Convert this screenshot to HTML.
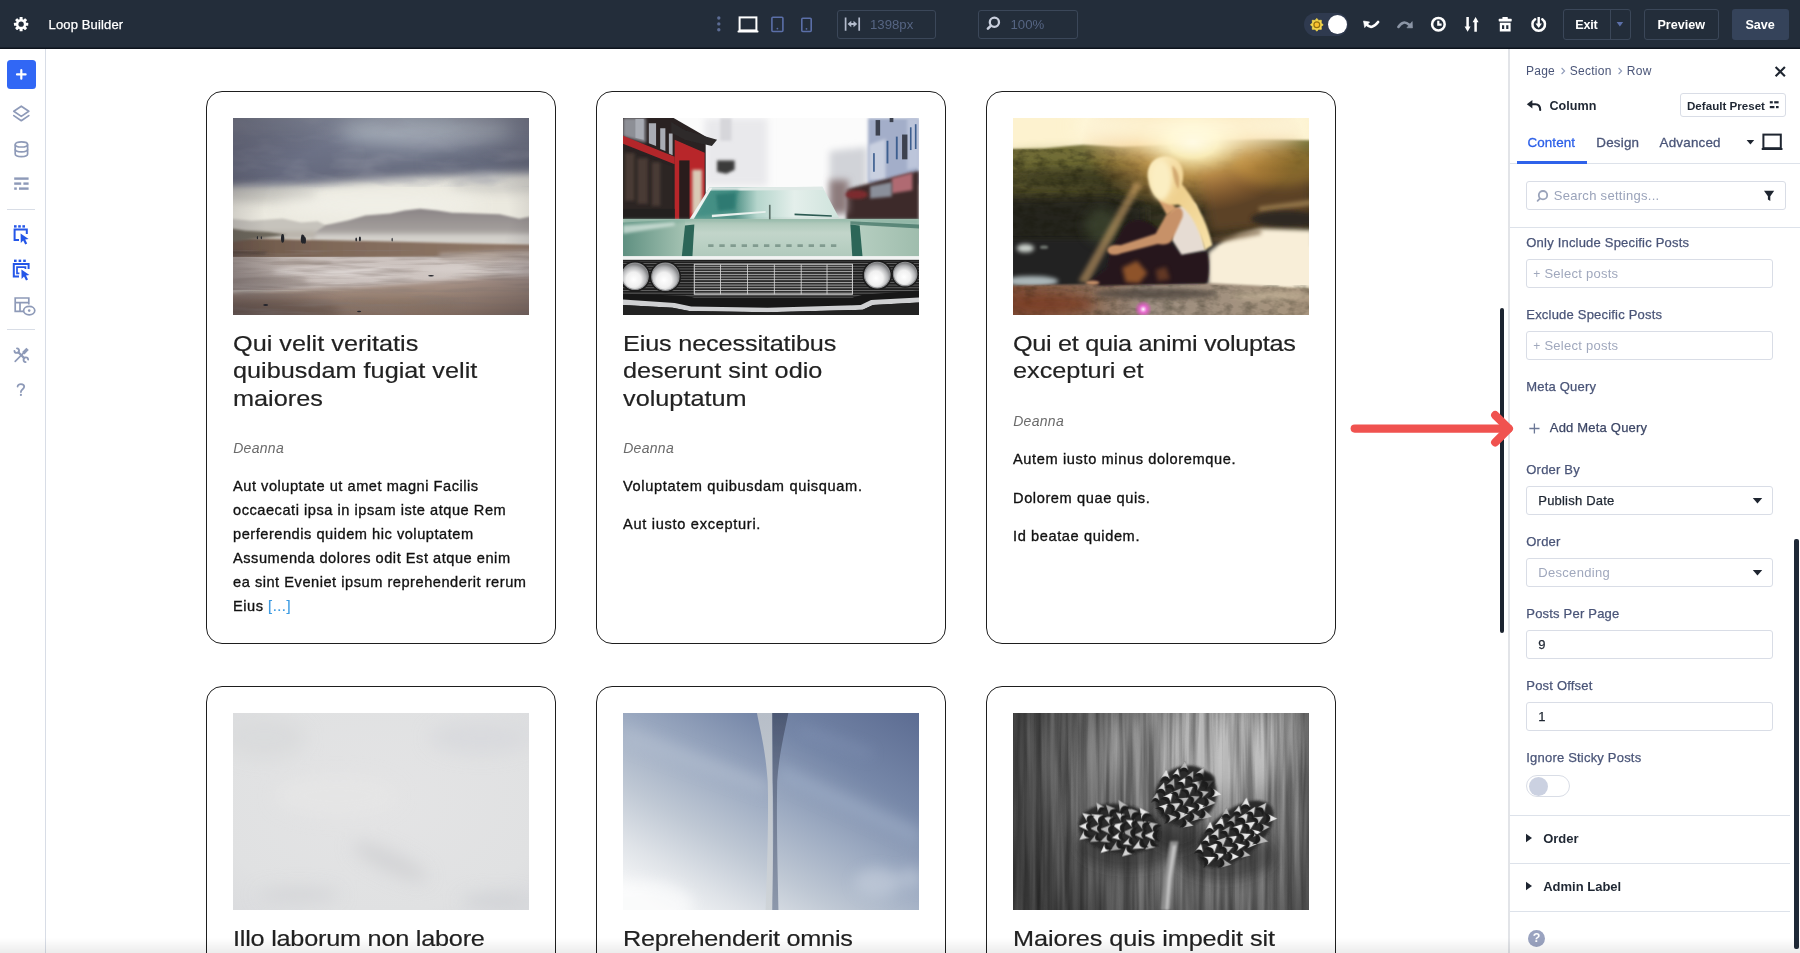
<!DOCTYPE html>
<html>
<head>
<meta charset="utf-8">
<title>Loop Builder</title>
<style>
*{box-sizing:border-box;margin:0;padding:0}
html,body{width:1800px;height:953px;overflow:hidden;background:#fff}
body{font-family:"Liberation Sans",sans-serif;position:relative;color:#222}
#topbar,#left,#right,#canvas{will-change:transform}
.abs{position:absolute}
#topbar{position:absolute;left:0;top:0;width:1800px;height:49.1px;background:#232d3a;box-shadow:inset 0 -1.4px 0 #0d131c;z-index:5}
#topbar .t{position:absolute;color:#fff;font-size:13px;white-space:nowrap;line-height:16px;margin-top:.5px}
.tb-box{position:absolute;border:1px solid #3b4759;border-radius:3px}
#left{position:absolute;left:0;top:48px;width:46px;height:905px;border-right:1px solid #d8dde6;background:#fff}
#right{position:absolute;left:1508px;top:48px;width:292px;height:905px;border-left:2px solid #e2e4e8;background:#fff}
#right .lbl{position:absolute;left:17px;font-size:13px;color:#4a5578;white-space:nowrap;line-height:16px;letter-spacing:.2px;-webkit-text-stroke:.25px #4a5578}
#right .box{position:absolute;left:17px;width:247px;height:29px;border:1px solid #d9dde6;border-radius:3px;background:#fff;font-size:13px;line-height:27px;white-space:nowrap}
#right .hr{position:absolute;left:0;height:1px;background:#dde2ea}
.card{position:absolute;width:350px;border:1.5px solid #1e1e1e;border-radius:16px;background:#fff}
.card .img{position:absolute;left:25.5px;top:25.5px;width:296px;height:197px;overflow:hidden}
.card h2{position:absolute;left:25.5px;top:238.1px;font-weight:400;font-size:22px;line-height:27.2px;color:#222;-webkit-text-stroke:.18px #222;white-space:nowrap;transform:scaleX(1.148);transform-origin:0 0}
.card .au{position:absolute;left:26.2px;font-style:italic;font-size:14px;letter-spacing:.3px;color:#6a6a6a;line-height:18px;white-space:nowrap}
.card .p{position:absolute;left:26px;margin-top:.6px;font-size:14.6px;line-height:24px;color:#111;white-space:nowrap;letter-spacing:.53px;-webkit-text-stroke:.33px #111}
.card .p a{color:#3b9ae1;-webkit-text-stroke:.2px #3b9ae1}
</style>
</head>
<body>

<!-- CANVAS -->
<div id="canvas">
  <div class="card" style="left:206px;top:91px;height:553px" id="c1">
    <div class="img" id="img1"><svg viewBox="0 0 1432 953" width="296" height="197" preserveAspectRatio="none" style="display:block">
<defs>
  <filter id="a-b4" filterUnits="userSpaceOnUse" x="-300" y="-300" width="2032" height="1553"><feGaussianBlur stdDeviation="4"/></filter>
  <filter id="a-b10" filterUnits="userSpaceOnUse" x="-300" y="-300" width="2032" height="1553"><feGaussianBlur stdDeviation="10"/></filter>
  <filter id="a-b22" filterUnits="userSpaceOnUse" x="-300" y="-300" width="2032" height="1553"><feGaussianBlur stdDeviation="22"/></filter>
  <filter id="a-b45" filterUnits="userSpaceOnUse" x="-300" y="-300" width="2032" height="1553"><feGaussianBlur stdDeviation="45"/></filter>
  <linearGradient id="a-sky" x1="0" y1="0" x2="0" y2="1">
    <stop offset="0" stop-color="#8b92a3"/><stop offset=".5" stop-color="#747a8d"/><stop offset="1" stop-color="#5e6275"/>
  </linearGradient>
  <linearGradient id="a-mtn" x1="0" y1="0" x2="0" y2="1">
    <stop offset="0" stop-color="#8b8586"/><stop offset=".6" stop-color="#a29d9b"/><stop offset="1" stop-color="#cdc9c4"/>
  </linearGradient>
  <linearGradient id="a-sand1" x1="0" y1="0" x2="1" y2="0">
    <stop offset="0" stop-color="#6a5547"/><stop offset=".35" stop-color="#806959"/><stop offset="1" stop-color="#917a6a"/>
  </linearGradient>
  <linearGradient id="a-wet" x1="0" y1="0" x2="1" y2="0">
    <stop offset="0" stop-color="#a89c96"/><stop offset=".3" stop-color="#c9bfbb"/><stop offset=".7" stop-color="#cfc6c2"/><stop offset="1" stop-color="#c2b7b2"/>
  </linearGradient>
  <linearGradient id="a-sand2" x1="0" y1="0" x2="0" y2="1">
    <stop offset="0" stop-color="#a8948a"/><stop offset=".5" stop-color="#9a8375"/><stop offset="1" stop-color="#8a7264"/>
  </linearGradient>
  <radialGradient id="a-vig" cx=".52" cy=".5" r=".75">
    <stop offset=".55" stop-color="#2a2530" stop-opacity="0"/><stop offset="1" stop-color="#2a2530" stop-opacity=".42"/>
  </radialGradient>
  <filter id="a-tex" x="0" y="0" width="100%" height="100%">
    <feTurbulence type="fractalNoise" baseFrequency="0.0035 0.045" numOctaves="3" seed="8"/>
    <feColorMatrix type="matrix" values="0 0 0 0 0.25  0 0 0 0 0.2  0 0 0 0 0.18  2.4 0 0 0 -1.0"/>
  </filter>
  <filter id="a-tex2" x="0" y="0" width="100%" height="100%">
    <feTurbulence type="fractalNoise" baseFrequency="0.004 0.012" numOctaves="3" seed="21"/>
    <feColorMatrix type="matrix" values="0 0 0 0 0.3  0 0 0 0 0.31  0 0 0 0 0.38  2.2 0 0 0 -1.0"/>
  </filter>
</defs>
<rect width="1432" height="953" fill="#ebe9df"/>
<!-- dark storm sky -->
<path d="M-60 -60 H1500 V262 L1250 268 L1000 282 L700 300 L420 322 L200 340 L-60 345Z" fill="url(#a-sky)" filter="url(#a-b22)"/>
<ellipse cx="930" cy="55" rx="430" ry="75" fill="#a9b1bb" opacity=".85" filter="url(#a-b45)"/>
<ellipse cx="230" cy="170" rx="330" ry="110" fill="#666a80" opacity=".5" filter="url(#a-b45)"/>
<ellipse cx="1250" cy="210" rx="300" ry="60" fill="#5c6072" opacity=".5" filter="url(#a-b45)"/>
<!-- greyer clouds low -->
<ellipse cx="150" cy="370" rx="260" ry="40" fill="#bdbcb6" opacity=".8" filter="url(#a-b22)"/>
<ellipse cx="1300" cy="330" rx="250" ry="35" fill="#c9c8c2" opacity=".7" filter="url(#a-b22)"/>
<ellipse cx="700" cy="420" rx="500" ry="60" fill="#f3f2ea" opacity=".8" filter="url(#a-b45)"/>
<!-- far mountains left -->
<path d="M-10 487 L90 497 L240 486 L330 506 L410 500 L470 530 L470 580 L-10 580Z" fill="#c6c3bc" filter="url(#a-b4)"/>
<!-- main mountain -->
<path d="M380 565 L450 518 L560 495 L640 472 L760 462 L830 448 L905 439 L990 448 L1060 458 L1180 462 L1290 466 L1385 487 L1440 477 V600 H380Z" fill="url(#a-mtn)" filter="url(#a-b4)"/>
<!-- mist / sea strip -->
<rect x="380" y="566" width="1100" height="44" fill="#d3d0cb" filter="url(#a-b10)"/>
<rect x="-20" y="548" width="420" height="30" fill="#b9b3aa" filter="url(#a-b10)"/>
<!-- upper sand -->
<path d="M-20 578 L300 588 L700 596 L1100 606 L1450 612 V665 L1100 672 L-20 682Z" fill="url(#a-sand1)" filter="url(#a-b4)"/>
<path d="M-10 535 L60 545 L170 552 L260 565 L-10 600Z" fill="#6d675c" filter="url(#a-b4)"/>
<path d="M-10 640 L170 648 L150 662 L-10 668Z" fill="#5a4a40" filter="url(#a-b4)"/>
<!-- wet sand -->
<rect x="-20" y="672" width="1480" height="160" fill="url(#a-wet)"/>
<path d="M1000 655 L1450 640 V690 L1000 685Z" fill="#b5a79f" filter="url(#a-b10)"/>
<ellipse cx="520" cy="745" rx="330" ry="26" fill="#ded7d4" opacity=".8" filter="url(#a-b10)"/>
<ellipse cx="1150" cy="730" rx="250" ry="20" fill="#d9d1ce" opacity=".7" filter="url(#a-b10)"/>
<ellipse cx="160" cy="790" rx="200" ry="22" fill="#978a84" opacity=".7" filter="url(#a-b10)"/>
<ellipse cx="330" cy="700" rx="150" ry="10" fill="#a3968f" opacity=".7" filter="url(#a-b4)"/>
<!-- lower sand -->
<path d="M-20 845 L300 832 L650 815 L1000 790 L1250 772 L1450 765 V980 H-20Z" fill="url(#a-sand2)" filter="url(#a-b10)"/>
<ellipse cx="200" cy="930" rx="330" ry="55" fill="#705b50" opacity=".75" filter="url(#a-b22)"/>
<ellipse cx="800" cy="900" rx="300" ry="30" fill="#85705f" opacity=".6" filter="url(#a-b22)"/>
<rect x="0" y="640" width="1432" height="313" fill="#000" filter="url(#a-tex)" opacity=".5"/>
<rect x="0" y="0" width="1432" height="330" fill="#000" filter="url(#a-tex2)" opacity=".45"/>
<!-- people -->
<g fill="#23252b">
  <ellipse cx="240" cy="583" rx="8" ry="20"/><circle cx="240" cy="566" r="5"/>
  <ellipse cx="338" cy="587" rx="10" ry="21"/><circle cx="336" cy="569" r="5"/><ellipse cx="347" cy="592" rx="6" ry="16"/>
  <ellipse cx="596" cy="588" rx="4" ry="10"/><ellipse cx="614" cy="585" rx="5" ry="12"/>
  <ellipse cx="770" cy="588" rx="3" ry="9"/>
  <ellipse cx="118" cy="579" rx="3" ry="8"/><ellipse cx="137" cy="579" rx="3" ry="7"/>
  <ellipse cx="958" cy="763" rx="14" ry="4"/><ellipse cx="158" cy="905" rx="12" ry="5"/><ellipse cx="610" cy="936" rx="10" ry="4"/>
</g>
<rect width="1432" height="953" fill="url(#a-vig)"/>
</svg>
</div>
    <h2>Qui velit veritatis<br>quibusdam fugiat velit<br>maiores</h2>
    <div class="au" style="top:347px">Deanna</div>
    <div class="p" style="top:381px">Aut voluptate ut amet magni Facilis<br>occaecati ipsa in ipsam iste atque Rem<br>perferendis quidem hic voluptatem<br>Assumenda dolores odit Est atque enim<br>ea sint Eveniet ipsum reprehenderit rerum<br>Eius <a>[...]</a></div>
  </div>
  <div class="card" style="left:596px;top:91px;height:553px" id="c2">
    <div class="img" id="img2"><svg viewBox="0 0 1432 953" width="296" height="197" preserveAspectRatio="none" style="display:block">
<defs>
  <filter id="b-b3" filterUnits="userSpaceOnUse" x="-300" y="-300" width="2032" height="1553"><feGaussianBlur stdDeviation="3"/></filter>
  <filter id="b-b8" filterUnits="userSpaceOnUse" x="-300" y="-300" width="2032" height="1553"><feGaussianBlur stdDeviation="8"/></filter>
  <filter id="b-b18" filterUnits="userSpaceOnUse" x="-300" y="-300" width="2032" height="1553"><feGaussianBlur stdDeviation="18"/></filter>
  <linearGradient id="b-hood" x1="0" y1="0" x2="0" y2="1">
    <stop offset="0" stop-color="#a8c4b5"/><stop offset=".35" stop-color="#c2d5ca"/><stop offset="1" stop-color="#afc9bb"/>
  </linearGradient>
  <linearGradient id="b-hoodL" x1="0" y1="0" x2="1" y2="0">
    <stop offset="0" stop-color="#5f9081"/><stop offset="1" stop-color="#a5c3b3"/>
  </linearGradient>
  <linearGradient id="b-hoodR" x1="0" y1="0" x2="1" y2="0">
    <stop offset="0" stop-color="#b4cdbf"/><stop offset="1" stop-color="#9fbdad"/>
  </linearGradient>
  <linearGradient id="b-ws" x1="0" y1="0" x2="1" y2="0">
    <stop offset="0" stop-color="#5ea093"/><stop offset=".3" stop-color="#4f9186"/><stop offset=".45" stop-color="#b5d5cc"/><stop offset=".7" stop-color="#e4efeb"/><stop offset="1" stop-color="#cfe3dc"/>
  </linearGradient>
  <pattern id="b-bars" width="10" height="13" patternUnits="userSpaceOnUse"><rect width="10" height="13" fill="#2b2b2b"/><rect y="0" width="10" height="4.5" fill="#b2b2b2"/></pattern>
  <pattern id="b-bars2" width="10" height="13" patternUnits="userSpaceOnUse"><rect width="10" height="13" fill="#1e1e1e"/><rect y="0" width="10" height="4" fill="#6a6a6a"/></pattern>
  <radialGradient id="b-lamp" cx=".45" cy=".62" r=".62">
    <stop offset="0" stop-color="#ffffff"/><stop offset=".45" stop-color="#f0f0f0"/><stop offset=".75" stop-color="#b4b5b7"/><stop offset="1" stop-color="#6c6d6f"/>
  </radialGradient>
</defs>
<rect width="1432" height="953" fill="#fbfbfb"/>
<!-- white-ish building behind, left centre -->
<path d="M395 0 H700 V330 H395Z" fill="#e9e9ec" filter="url(#b-b18)"/>
<path d="M470 0 H525 V110 H470Z" fill="#d6d6da" filter="url(#b-b8)"/>
<path d="M455 205 H540 V250 L500 270 L455 260Z" fill="#3a3a3a" filter="url(#b-b8)"/>
<!-- left dark building -->
<path d="M0 0 H245 L400 90 V520 H0Z" fill="#2a2423" filter="url(#b-b3)"/>
<path d="M0 0 H110 V120 L0 90Z" fill="#8d8f96" filter="url(#b-b8)"/>
<g fill="#a9acb4" filter="url(#b-b3)"><path d="M60 5 H100 V105 L60 95Z"/><path d="M125 25 H160 V135 L125 122Z"/><path d="M180 50 H205 V160 L180 150Z"/><path d="M222 75 H240 V180 L222 172Z"/></g>
<path d="M0 86 L250 188 V224 L0 124Z" fill="#b3262b" filter="url(#b-b3)"/>
<path d="M250 105 L395 168 V500 H250Z" fill="#b8282c" filter="url(#b-b3)"/>
<path d="M272 205 H322 V500 H272Z" fill="#2a1d1d" filter="url(#b-b3)"/>
<path d="M335 250 H382 V440 L335 470Z" fill="#d9c9b5" filter="url(#b-b8)"/>
<path d="M235 20 L300 60 L455 105 L430 135 L300 105 L235 70Z" fill="#2d2b2b" filter="url(#b-b3)"/>
<path d="M0 150 L240 235 V440 H0Z" fill="#2c2523"/>
<g fill="#4a3a34" filter="url(#b-b8)"><rect x="10" y="170" width="45" height="230"/><rect x="70" y="195" width="50" height="220"/><rect x="140" y="215" width="40" height="210"/></g>
<rect x="0" y="440" width="250" height="70" fill="#23201f"/>
<!-- right buildings -->
<path d="M1000 160 L1180 140 V470 H1000Z" fill="#d1d3d8" filter="url(#b-b18)"/>
<path d="M1185 0 H1432 V320 H1185Z" fill="#a3aec9" filter="url(#b-b8)"/>
<path d="M1190 130 L1270 100 V300 H1190Z" fill="#c9d0e0" filter="url(#b-b8)"/>
<path d="M1375 0 H1432 V240 L1375 250Z" fill="#bcc5da" filter="url(#b-b8)"/>
<g fill="#3d5f8f" filter="url(#b-b3)"><rect x="1275" y="110" width="9" height="110"/><rect x="1320" y="90" width="9" height="110"/><rect x="1210" y="170" width="8" height="90"/><rect x="1388" y="45" width="8" height="110"/><rect x="1412" y="30" width="8" height="120"/></g>
<g fill="#3e4350" filter="url(#b-b3)"><rect x="1222" y="10" width="22" height="75"/><rect x="1350" y="80" width="26" height="120"/><rect x="1290" y="0" width="18" height="20"/></g>
<path d="M1080 345 L1432 255 V510 H1080Z" fill="#3e2a2b" filter="url(#b-b8)"/>
<path d="M1000 300 H1090 V460 H1000Z" fill="#8d7a7c" filter="url(#b-b18)"/>
<path d="M1300 290 L1400 265 V350 L1300 365Z" fill="#b06a72" filter="url(#b-b8)"/>
<path d="M1195 330 L1300 310 V380 L1195 390Z" fill="#8a8f9a" filter="url(#b-b8)"/>
<ellipse cx="1130" cy="370" rx="55" ry="22" fill="#7c2a2d" filter="url(#b-b8)"/>
<!-- car roof / windshield -->
<path d="M418 338 L965 333 L1045 482 L325 492Z" fill="url(#b-ws)" filter="url(#b-b3)"/>
<path d="M418 338 L965 333 L972 348 L412 352Z" fill="#dfe9e6"/>
<path d="M425 350 L560 350 L540 450 L345 480Z" fill="#3f8d83" opacity=".8" filter="url(#b-b8)"/>
<path d="M450 370 L545 360 L540 440 L460 450Z" fill="#2f7a72" filter="url(#b-b8)"/>
<path d="M320 492 L418 338 L432 338 L340 492Z" fill="#eef3f1"/>
<path d="M430 468 L690 450 L690 458 L430 480Z" fill="#e8f0ed"/><path d="M830 462 L1010 470 L1010 478 L830 470Z" fill="#2c5a52"/>
<!-- hood -->
<rect x="0" y="488" width="1432" height="195" fill="url(#b-hood)"/>
<path d="M0 505 L300 490 V683 H0Z" fill="url(#b-hoodL)"/>
<path d="M1150 495 L1432 520 V683 H1150Z" fill="url(#b-hoodR)"/>
<path d="M0 488 H1432 V520 L1100 500 L340 500 L0 530Z" fill="#7aa898" opacity=".55" filter="url(#b-b8)"/>
<path d="M300 520 L345 515 L335 683 L283 683Z" fill="#2c6658"/>
<path d="M1100 515 L1145 520 L1160 683 L1110 683Z" fill="#2c6658"/>
<path d="M0 520 L250 505 L250 520 L0 560Z" fill="#dfece5" opacity=".7" filter="url(#b-b8)"/>
<path d="M1100 500 L1432 515 V535 L1100 515Z" fill="#3d6f62" opacity=".7" filter="url(#b-b3)"/>
<path d="M412 617 H1048" stroke="#6f8a7f" stroke-width="13" stroke-dasharray="26 28" opacity=".75"/>
<rect x="706" y="420" width="8" height="70" fill="#5b6f68"/>
<!-- chrome strip -->
<rect x="0" y="668" width="1432" height="22" fill="#f2f4f3"/>
<rect x="0" y="686" width="1432" height="10" fill="#1f1f1f"/>
<!-- grille -->
<rect x="0" y="694" width="1432" height="175" fill="url(#b-bars2)"/>
<rect x="345" y="708" width="765" height="145" fill="url(#b-bars)"/>
<g fill="#d9d9d9"><rect x="470" y="708" width="4" height="145"/><rect x="600" y="708" width="4" height="145"/><rect x="730" y="708" width="4" height="145"/><rect x="860" y="708" width="4" height="145"/><rect x="985" y="708" width="4" height="145"/></g>
<path d="M345 708 H1110 V853 H345Z" fill="none" stroke="#cfcfcf" stroke-width="5"/>
<!-- headlights -->
<g>
  <circle cx="58" cy="766" r="74" fill="#1c1c1c"/><circle cx="58" cy="766" r="64.0" fill="url(#b-lamp)"/><circle cx="58" cy="766" r="64.0" fill="none" stroke="#8f9092" stroke-width="5"/>
  <circle cx="205" cy="768" r="76" fill="#1c1c1c"/><circle cx="205" cy="768" r="66.0" fill="url(#b-lamp)"/><circle cx="205" cy="768" r="66.0" fill="none" stroke="#8f9092" stroke-width="5"/>
  <circle cx="1230" cy="760" r="72" fill="#1c1c1c"/><circle cx="1230" cy="760" r="62.0" fill="url(#b-lamp)"/><circle cx="1230" cy="760" r="62.0" fill="none" stroke="#8f9092" stroke-width="5"/>
  <circle cx="1365" cy="755" r="66" fill="#1c1c1c"/><circle cx="1365" cy="755" r="57.0" fill="url(#b-lamp)"/><circle cx="1365" cy="755" r="57.0" fill="none" stroke="#8f9092" stroke-width="5"/>
</g>
<!-- bumper -->
<path d="M0 850 L300 860 L345 868 H1110 L1160 855 L1432 835 V953 H0Z" fill="#171717"/>
<path d="M0 878 L250 895 L330 912 L700 918 L1150 905 L1200 880 L1432 868 V893 L1210 905 L1160 928 L700 940 L320 934 L240 918 L0 905Z" fill="#cfd0d2" filter="url(#b-b3)"/>
<path d="M0 905 L240 918 L320 934 L700 940 L1160 928 L1210 905 L1432 893 V953 H0Z" fill="#222" filter="url(#b-b3)"/>
</svg>
</div>
    <h2><span style="letter-spacing:-.14px">Eius necessitatibus</span><br>deserunt sint odio<br>voluptatum</h2>
    <div class="au" style="top:347px">Deanna</div>
    <div class="p" style="top:381px;letter-spacing:.66px">Voluptatem quibusdam quisquam.</div>
    <div class="p" style="top:419.5px;letter-spacing:.7px">Aut iusto excepturi.</div>
  </div>
  <div class="card" style="left:986px;top:91px;height:553px" id="c3">
    <div class="img" id="img3"><svg viewBox="0 0 1432 953" width="296" height="197" preserveAspectRatio="none" style="display:block">
<defs>
  <filter id="c-b4" filterUnits="userSpaceOnUse" x="-300" y="-300" width="2032" height="1553"><feGaussianBlur stdDeviation="4"/></filter>
  <filter id="c-b10" filterUnits="userSpaceOnUse" x="-300" y="-300" width="2032" height="1553"><feGaussianBlur stdDeviation="10"/></filter>
  <filter id="c-b25" filterUnits="userSpaceOnUse" x="-300" y="-300" width="2032" height="1553"><feGaussianBlur stdDeviation="25"/></filter>
  <filter id="c-b50" filterUnits="userSpaceOnUse" x="-300" y="-300" width="2032" height="1553"><feGaussianBlur stdDeviation="50"/></filter>
  <filter id="c-tex" x="0" y="0" width="100%" height="100%" color-interpolation-filters="sRGB">
    <feTurbulence type="fractalNoise" baseFrequency="0.018 0.03" numOctaves="3" seed="3"/>
    <feColorMatrix type="matrix" values="0 0 0 0 0.08  0 0 0 0 0.08  0 0 0 0 0.03  1.9 0 0 0 -0.75"/>
  </filter>
  <linearGradient id="c-trees" x1="0" y1="0" x2="0" y2="1">
    <stop offset="0" stop-color="#7a7439"/><stop offset=".22" stop-color="#5b572c"/><stop offset=".55" stop-color="#3d3a22"/><stop offset="1" stop-color="#27271d"/>
  </linearGradient>
  <radialGradient id="c-sun" cx=".5" cy=".5" r=".5">
    <stop offset="0" stop-color="#fffbe6" stop-opacity="1"/><stop offset=".22" stop-color="#ffefb4" stop-opacity=".95"/><stop offset=".5" stop-color="#f0b45c" stop-opacity=".62"/><stop offset="1" stop-color="#d98a3a" stop-opacity="0"/>
  </radialGradient>
  <linearGradient id="c-rock" x1="0" y1="0" x2="1" y2="0">
    <stop offset="0" stop-color="#7a4a34"/><stop offset=".25" stop-color="#8a6a55"/><stop offset=".45" stop-color="#9d8e80"/><stop offset="1" stop-color="#a8957e"/>
  </linearGradient>
  <radialGradient id="c-flare" cx=".5" cy=".5" r=".5">
    <stop offset="0" stop-color="#fff" stop-opacity="1"/><stop offset=".4" stop-color="#f06ad8" stop-opacity=".9"/><stop offset="1" stop-color="#e040c0" stop-opacity="0"/>
  </radialGradient>
  <linearGradient id="c-hair" x1="0" y1="0" x2="1" y2="1">
    <stop offset="0" stop-color="#fdf0c4"/><stop offset=".45" stop-color="#efd08e"/><stop offset="1" stop-color="#f8e3aa"/>
  </linearGradient>
</defs>
<rect width="1432" height="953" fill="#fdf2cf"/>
<!-- trees -->
<path d="M-20 150 L150 147 L340 130 L520 139 L700 132 L860 122 L1000 106 L1200 103 L1450 108 V620 H-20Z" fill="url(#c-trees)" filter="url(#c-b4)"/>
<ellipse cx="250" cy="205" rx="330" ry="50" fill="#7f7c3e" opacity=".55" filter="url(#c-b25)"/>
<ellipse cx="170" cy="335" rx="240" ry="36" fill="#666333" opacity=".5" filter="url(#c-b25)"/>
<path d="M-40 390 L450 380 L640 420 L640 600 L-40 600Z" fill="#24241a" opacity=".82" filter="url(#c-b25)"/>
<ellipse cx="330" cy="290" rx="300" ry="40" fill="#33321f" opacity=".6" filter="url(#c-b25)"/>
<rect x="0" y="150" width="1432" height="430" fill="#000" filter="url(#c-tex)" opacity=".5"/>
<!-- right side trees, warm brown -->
<path d="M900 250 H1450 V520 L1200 540 L950 560Z" fill="#5c4326" filter="url(#c-b25)"/>
<ellipse cx="1290" cy="230" rx="220" ry="100" fill="#94722f" opacity=".75" filter="url(#c-b25)"/>
<path d="M1190 430 L1450 395 V420 L1190 455Z" fill="#a88a58" opacity=".8" filter="url(#c-b10)"/>
<ellipse cx="1320" cy="488" rx="170" ry="40" fill="#2c2820" opacity=".9" filter="url(#c-b10)"/>
<!-- water left (dark) -->
<path d="M-20 588 H1000 V820 H-20Z" fill="#202321" filter="url(#c-b10)"/>
<ellipse cx="430" cy="520" rx="85" ry="85" fill="#3f4a33" opacity=".7" filter="url(#c-b25)"/>
<!-- water right (bright) -->
<path d="M945 650 L1020 590 L1100 560 L1200 535 L1450 542 V830 H945Z" fill="#f8eed8" filter="url(#c-b10)"/>
<path d="M960 575 L1200 540 L1200 562 L960 610Z" fill="#6a5030" opacity=".65" filter="url(#c-b10)"/>
<ellipse cx="60" cy="630" rx="42" ry="20" fill="#dfe6e0" opacity=".9" filter="url(#c-b10)"/>
<ellipse cx="150" cy="625" rx="20" ry="8" fill="#9aa39a" opacity=".7" filter="url(#c-b4)"/>
<ellipse cx="90" cy="790" rx="130" ry="26" fill="#cfdde0" opacity=".8" filter="url(#c-b10)"/>
<!-- sun glow -->
<ellipse cx="870" cy="115" rx="540" ry="340" fill="url(#c-sun)"/>
<ellipse cx="860" cy="40" rx="560" ry="110" fill="#fffae2" opacity=".8" filter="url(#c-b50)"/>
<!-- flare ray -->
<path d="M588 308 L626 320 L362 800 L316 790Z" fill="#e9b774" opacity=".5" filter="url(#c-b10)"/>
<!-- rock -->
<path d="M-20 812 L350 806 L600 800 L950 798 L1200 812 L1450 825 V980 H-20Z" fill="url(#c-rock)" filter="url(#c-b4)"/>
<rect x="0" y="810" width="1432" height="143" fill="#000" filter="url(#c-tex)" opacity=".35"/>
<ellipse cx="180" cy="900" rx="220" ry="45" fill="#7a3a24" opacity=".8" filter="url(#c-b25)"/>
<ellipse cx="690" cy="850" rx="300" ry="26" fill="#4d443d" opacity=".75" filter="url(#c-b10)"/>
<ellipse cx="1250" cy="860" rx="200" ry="20" fill="#c8b79c" opacity=".6" filter="url(#c-b10)"/>
<!-- girl: skirt / legs -->
<path d="M468 652 L540 520 C570 485 640 480 690 530 L760 600 L815 660 L938 648 C952 700 950 770 935 800 L420 812 L358 798 L455 725Z" fill="#26191f" filter="url(#c-b4)"/>
<path d="M528 725 L600 690 L650 750 L610 800 L545 795Z" fill="#a8642f" opacity=".8" filter="url(#c-b10)"/>
<path d="M690 735 L740 720 L760 780 L700 790Z" fill="#8a4f2a" opacity=".6" filter="url(#c-b10)"/>
<ellipse cx="385" cy="797" rx="34" ry="11" fill="#c48f68" filter="url(#c-b4)"/>
<!-- top -->
<path d="M768 455 L850 402 L885 420 L932 640 L815 662 L770 590Z" fill="#e6dcd3" filter="url(#c-b4)"/>
<!-- arm -->
<path d="M775 440 C800 420 830 440 820 480 L770 590 C760 610 730 615 700 610 L520 655 C490 670 450 660 458 632 C470 612 500 615 520 615 L690 560 L740 470Z" fill="#c79168" filter="url(#c-b4)"/>
<!-- neck / face edge -->
<path d="M700 390 L760 395 L790 440 L745 470Z" fill="#d6a070" filter="url(#c-b4)"/>
<!-- hair -->
<path d="M655 300 C640 225 690 180 750 186 C815 195 835 255 818 320 C870 385 935 480 965 615 L928 640 C905 545 860 450 800 418 C745 430 672 395 655 300Z" fill="url(#c-hair)" filter="url(#c-b4)"/>
<ellipse cx="715" cy="300" rx="50" ry="95" fill="#fbeec2" filter="url(#c-b10)"/>
<path d="M770 230 C800 250 812 300 800 345 C790 330 775 300 770 230Z" fill="#c79a62" opacity=".75" filter="url(#c-b4)"/>
<!-- lens flare -->
<ellipse cx="630" cy="925" rx="42" ry="42" fill="url(#c-flare)"/>
</svg>
</div>
    <h2><span style="letter-spacing:-.27px">Qui et quia animi voluptas</span><br>excepturi et</h2>
    <div class="au" style="top:320px">Deanna</div>
    <div class="p" style="top:354.5px;letter-spacing:.62px">Autem iusto minus doloremque.</div>
    <div class="p" style="top:393px;letter-spacing:.6px">Dolorem quae quis.</div>
    <div class="p" style="top:431.5px;letter-spacing:.6px">Id beatae quidem.</div>
  </div>
  <div class="card" style="left:206px;top:686px;height:400px" id="c4">
    <div class="img" id="img4"><svg viewBox="0 0 1432 953" width="296" height="197" preserveAspectRatio="none" style="display:block">
<defs>
  <filter id="d-b40" filterUnits="userSpaceOnUse" x="-300" y="-300" width="2032" height="1553"><feGaussianBlur stdDeviation="40"/></filter>
  <radialGradient id="d-bg" cx=".5" cy=".45" r=".8"><stop offset="0" stop-color="#e4e4e5"/><stop offset=".7" stop-color="#e0e1e2"/><stop offset="1" stop-color="#d9dadd"/></radialGradient>
</defs>
<rect width="1432" height="953" fill="url(#d-bg)"/>
<g filter="url(#d-b40)">
<ellipse cx="760" cy="720" rx="200" ry="50" fill="#d0d1d4" opacity=".9" transform="rotate(25 760 720)"/>
<ellipse cx="320" cy="880" rx="200" ry="35" fill="#d2d3d6" opacity=".9"/>
<ellipse cx="1280" cy="910" rx="180" ry="40" fill="#cfd0d5" opacity=".9"/>
<ellipse cx="1200" cy="120" rx="250" ry="80" fill="#d8d9dd" opacity=".9"/>
<ellipse cx="150" cy="120" rx="200" ry="100" fill="#d9dadc" opacity=".9"/>
<ellipse cx="500" cy="400" rx="300" ry="100" fill="#e5e5e6" opacity=".9"/>
</g>
</svg>
</div>
    <h2 style="letter-spacing:-.2px">Illo laborum non labore</h2>
  </div>
  <div class="card" style="left:596px;top:686px;height:400px" id="c5">
    <div class="img" id="img5"><svg viewBox="0 0 1432 953" width="296" height="197" preserveAspectRatio="none" style="display:block">
<defs>
  <filter id="e-b30" filterUnits="userSpaceOnUse" x="-300" y="-300" width="2032" height="1553"><feGaussianBlur stdDeviation="30"/></filter>
  <filter id="e-b2" filterUnits="userSpaceOnUse" x="-300" y="-300" width="2032" height="1553"><feGaussianBlur stdDeviation="2.5"/></filter>
  <linearGradient id="e-sky" x1="1" y1="0" x2=".12" y2="1">
    <stop offset="0" stop-color="#5c6c92"/><stop offset=".28" stop-color="#7687a8"/><stop offset=".5" stop-color="#9caac1"/><stop offset=".7" stop-color="#bfc8d4"/><stop offset=".86" stop-color="#dfe3e8"/><stop offset="1" stop-color="#f6f7f8"/>
  </linearGradient>
  <linearGradient id="e-dark" x1="0" y1="0" x2="0" y2="1">
    <stop offset="0" stop-color="#4c5873"/><stop offset=".3" stop-color="#66728b"/><stop offset="1" stop-color="#8d98ab"/>
  </linearGradient>
  <linearGradient id="e-light" x1="0" y1="0" x2="0" y2="1">
    <stop offset="0" stop-color="#b7bec8"/><stop offset=".5" stop-color="#c3c9d0"/><stop offset="1" stop-color="#cfd4d8"/>
  </linearGradient>
</defs>
<rect width="1432" height="953" fill="url(#e-sky)"/>
<g filter="url(#e-b30)" opacity=".55">
  <path d="M0 60 L700 330 L700 400 L0 150Z" fill="#b4bfd0"/>
  <path d="M760 250 L1432 560 V640 L760 330Z" fill="#9fafc8"/>
  <path d="M860 60 L1200 180 L1200 220 L860 110Z" fill="#8192b3"/>
  <ellipse cx="1230" cy="820" rx="110" ry="70" fill="#c9d2df"/>
  <ellipse cx="1390" cy="800" rx="60" ry="50" fill="#c2ccdb"/>
  <ellipse cx="80" cy="930" rx="260" ry="120" fill="#fff"/>
</g>
<!-- tower -->
<g filter="url(#e-b2)">
<path d="M648 0 C665 90 690 180 700 330 C705 500 698 750 690 953 L724 953 L724 0Z" fill="url(#e-light)"/>
<path d="M722 0 H800 C780 100 755 200 746 330 C742 520 748 760 752 953 L722 953 C728 700 728 450 724 330Z" fill="url(#e-dark)"/>
</g>
</svg>
</div>
    <h2 style="letter-spacing:-.22px">Reprehenderit omnis</h2>
  </div>
  <div class="card" style="left:986px;top:686px;height:400px" id="c6">
    <div class="img" id="img6"><svg viewBox="0 0 1432 953" width="296" height="197" preserveAspectRatio="none" style="display:block">
<defs>
  <filter id="f-b6" filterUnits="userSpaceOnUse" x="-600" y="-600" width="2632" height="2153"><feGaussianBlur stdDeviation="6"/></filter>
  <filter id="f-b2" filterUnits="userSpaceOnUse" x="-600" y="-600" width="2632" height="2153"><feGaussianBlur stdDeviation="2.5"/></filter>
  <filter id="f-b30" filterUnits="userSpaceOnUse" x="-600" y="-600" width="2632" height="2153"><feGaussianBlur stdDeviation="30"/></filter>
  <filter id="f-b70" filterUnits="userSpaceOnUse" x="-600" y="-600" width="2632" height="2153"><feGaussianBlur stdDeviation="70"/></filter>
  <filter id="f-wood" x="0" y="0" width="100%" height="100%">
    <feTurbulence type="fractalNoise" baseFrequency="0.028 0.0012" numOctaves="3" seed="4" result="n"/>
    <feColorMatrix in="n" type="matrix" values="0 0 0 0 0  0 0 0 0 0  0 0 0 0 0  2.6 0 0 0 -0.85"/>
  </filter>
  <filter id="f-wood2" x="0" y="0" width="100%" height="100%">
    <feTurbulence type="fractalNoise" baseFrequency="0.035 0.0015" numOctaves="2" seed="11" result="n"/>
    <feColorMatrix in="n" type="matrix" values="0 0 0 0 1  0 0 0 0 1  0 0 0 0 1  2.2 0 0 0 -0.9"/>
  </filter>
  <linearGradient id="f-bg" x1="0" y1="0" x2="1" y2="0">
    <stop offset="0" stop-color="#585858"/><stop offset=".25" stop-color="#757575"/><stop offset=".55" stop-color="#8e8e8e"/><stop offset=".8" stop-color="#999"/><stop offset="1" stop-color="#7a7a7a"/>
  </linearGradient>
  <radialGradient id="f-vig" cx=".62" cy=".3" r=".85"><stop offset=".35" stop-color="#000" stop-opacity="0"/><stop offset="1" stop-color="#000" stop-opacity=".38"/></radialGradient>
</defs>
<rect width="1432" height="953" fill="url(#f-bg)"/>
<ellipse cx="1050" cy="150" rx="380" ry="240" fill="#c2c2c2" opacity=".8" filter="url(#f-b70)"/>
<ellipse cx="560" cy="180" rx="200" ry="200" fill="#9a9a9a" opacity=".6" filter="url(#f-b70)"/>
<ellipse cx="1300" cy="650" rx="200" ry="250" fill="#8c8c8c" opacity=".6" filter="url(#f-b70)"/>
<rect width="1432" height="953" fill="#000" filter="url(#f-wood)" opacity=".36"/>
<rect width="1432" height="953" fill="#fff" filter="url(#f-wood2)" opacity=".2"/>
<rect width="1432" height="953" fill="url(#f-vig)"/>
<ellipse cx="560" cy="650" rx="250" ry="110" fill="#202020" opacity=".5" filter="url(#f-b30)"/>
<ellipse cx="1020" cy="690" rx="250" ry="120" fill="#202020" opacity=".5" filter="url(#f-b30)"/>
<ellipse cx="790" cy="560" rx="140" ry="110" fill="#1a1a1a" opacity=".6" filter="url(#f-b30)"/>
<path d="M760 620 L800 620 L775 800 L762 953 L715 953 L730 800Z" fill="#8d8d8d" filter="url(#f-b6)"/>
<path d="M772 640 L790 640 L765 800 L750 953 L738 953 L748 800Z" fill="#c4c4c4" filter="url(#f-b6)"/>
<g filter="url(#f-b2)">
<g transform="translate(515 560) rotate(188)">
<ellipse cx="0" cy="0" rx="199" ry="119" fill="#2a2a2a" filter="url(#f-b6)"/>
<g transform="translate(-162 -57) rotate(-45)"><path d="M-31 -26 L35 0 L-31 26 Q-7 0 -31 -26Z" fill="#1d1d1d"/><path d="M-12 -22 L35 0 L-12 22 Q12 0 -12 -22Z" fill="rgb(185,185,185)"/></g>
<g transform="translate(-162 -10) rotate(-8)"><path d="M-35 -29 L39 0 L-35 29 Q-8 0 -35 -29Z" fill="#1d1d1d"/><path d="M-14 -24 L39 0 L-14 24 Q14 0 -14 -24Z" fill="rgb(222,222,222)"/></g>
<g transform="translate(-162 36) rotate(28)"><path d="M-32 -26 L35 0 L-32 26 Q-7 0 -32 -26Z" fill="#1d1d1d"/><path d="M-12 -22 L35 0 L-12 22 Q12 0 -12 -22Z" fill="rgb(185,185,185)"/></g>
<g transform="translate(-108 -65) rotate(-35)"><path d="M-35 -29 L39 0 L-35 29 Q-8 0 -35 -29Z" fill="#1d1d1d"/><path d="M-14 -24 L39 0 L-14 24 Q14 0 -14 -24Z" fill="rgb(214,214,214)"/></g>
<g transform="translate(-108 -14) rotate(-8)"><path d="M-29 -24 L32 0 L-29 24 Q-6 0 -29 -24Z" fill="#1d1d1d"/><path d="M-11 -20 L32 0 L-11 20 Q11 0 -11 -20Z" fill="rgb(185,185,185)"/></g>
<g transform="translate(-108 37) rotate(20)"><path d="M-32 -26 L35 0 L-32 26 Q-7 0 -32 -26Z" fill="#1d1d1d"/><path d="M-12 -22 L35 0 L-12 22 Q12 0 -12 -22Z" fill="rgb(185,185,185)"/></g>
<g transform="translate(-108 88) rotate(47)"><path d="M-34 -29 L38 0 L-34 29 Q-8 0 -34 -29Z" fill="#1d1d1d"/><path d="M-13 -24 L38 0 L-13 24 Q13 0 -13 -24Z" fill="rgb(232,232,232)"/></g>
<g transform="translate(-54 -105) rotate(-49)"><path d="M-31 -26 L35 0 L-31 26 Q-7 0 -31 -26Z" fill="#1d1d1d"/><path d="M-12 -22 L35 0 L-12 22 Q12 0 -12 -22Z" fill="rgb(214,214,214)"/></g>
<g transform="translate(-54 -58) rotate(-27)"><path d="M-28 -23 L31 0 L-28 23 Q-6 0 -28 -23Z" fill="#1d1d1d"/><path d="M-11 -19 L31 0 L-11 19 Q11 0 -11 -19Z" fill="rgb(222,222,222)"/></g>
<g transform="translate(-54 -11) rotate(-5)"><path d="M-35 -29 L39 0 L-35 29 Q-8 0 -35 -29Z" fill="#1d1d1d"/><path d="M-14 -24 L39 0 L-14 24 Q14 0 -14 -24Z" fill="rgb(168,168,168)"/></g>
<g transform="translate(-54 37) rotate(17)"><path d="M-28 -23 L31 0 L-28 23 Q-6 0 -28 -23Z" fill="#1d1d1d"/><path d="M-11 -19 L31 0 L-11 19 Q11 0 -11 -19Z" fill="rgb(240,240,240)"/></g>
<g transform="translate(-54 84) rotate(39)"><path d="M-36 -30 L40 0 L-36 30 Q-8 0 -36 -30Z" fill="#1d1d1d"/><path d="M-14 -25 L40 0 L-14 25 Q14 0 -14 -25Z" fill="rgb(168,168,168)"/></g>
<g transform="translate(0 -87) rotate(-39)"><path d="M-34 -28 L38 0 L-34 28 Q-8 0 -34 -28Z" fill="#1d1d1d"/><path d="M-13 -23 L38 0 L-13 23 Q13 0 -13 -23Z" fill="rgb(168,168,168)"/></g>
<g transform="translate(0 -38) rotate(-17)"><path d="M-29 -24 L32 0 L-29 24 Q-6 0 -29 -24Z" fill="#1d1d1d"/><path d="M-11 -20 L32 0 L-11 20 Q11 0 -11 -20Z" fill="rgb(232,232,232)"/></g>
<g transform="translate(0 11) rotate(5)"><path d="M-35 -29 L39 0 L-35 29 Q-8 0 -35 -29Z" fill="#1d1d1d"/><path d="M-14 -24 L39 0 L-14 24 Q14 0 -14 -24Z" fill="rgb(232,232,232)"/></g>
<g transform="translate(0 60) rotate(27)"><path d="M-28 -23 L31 0 L-28 23 Q-6 0 -28 -23Z" fill="#1d1d1d"/><path d="M-11 -19 L31 0 L-11 19 Q11 0 -11 -19Z" fill="rgb(214,214,214)"/></g>
<g transform="translate(0 109) rotate(49)"><path d="M-35 -29 L39 0 L-35 29 Q-8 0 -35 -29Z" fill="#1d1d1d"/><path d="M-14 -24 L39 0 L-14 24 Q14 0 -14 -24Z" fill="rgb(185,185,185)"/></g>
<g transform="translate(54 -105) rotate(-49)"><path d="M-28 -23 L31 0 L-28 23 Q-6 0 -28 -23Z" fill="#1d1d1d"/><path d="M-11 -19 L31 0 L-11 19 Q11 0 -11 -19Z" fill="rgb(240,240,240)"/></g>
<g transform="translate(54 -58) rotate(-27)"><path d="M-30 -25 L34 0 L-30 25 Q-7 0 -30 -25Z" fill="#1d1d1d"/><path d="M-12 -21 L34 0 L-12 21 Q12 0 -12 -21Z" fill="rgb(185,185,185)"/></g>
<g transform="translate(54 -11) rotate(-5)"><path d="M-35 -29 L39 0 L-35 29 Q-8 0 -35 -29Z" fill="#1d1d1d"/><path d="M-14 -24 L39 0 L-14 24 Q14 0 -14 -24Z" fill="rgb(185,185,185)"/></g>
<g transform="translate(54 37) rotate(17)"><path d="M-29 -25 L33 0 L-29 25 Q-7 0 -29 -25Z" fill="#1d1d1d"/><path d="M-11 -20 L33 0 L-11 20 Q11 0 -11 -20Z" fill="rgb(200,200,200)"/></g>
<g transform="translate(54 84) rotate(39)"><path d="M-32 -27 L35 0 L-32 27 Q-7 0 -32 -27Z" fill="#1d1d1d"/><path d="M-12 -22 L35 0 L-12 22 Q12 0 -12 -22Z" fill="rgb(168,168,168)"/></g>
<g transform="translate(108 -65) rotate(-35)"><path d="M-28 -23 L31 0 L-28 23 Q-6 0 -28 -23Z" fill="#1d1d1d"/><path d="M-11 -19 L31 0 L-11 19 Q11 0 -11 -19Z" fill="rgb(168,168,168)"/></g>
<g transform="translate(108 -14) rotate(-8)"><path d="M-30 -25 L33 0 L-30 25 Q-7 0 -30 -25Z" fill="#1d1d1d"/><path d="M-12 -21 L33 0 L-12 21 Q12 0 -12 -21Z" fill="rgb(185,185,185)"/></g>
<g transform="translate(108 37) rotate(20)"><path d="M-36 -30 L40 0 L-36 30 Q-8 0 -36 -30Z" fill="#1d1d1d"/><path d="M-14 -25 L40 0 L-14 25 Q14 0 -14 -25Z" fill="rgb(222,222,222)"/></g>
<g transform="translate(108 88) rotate(47)"><path d="M-28 -23 L31 0 L-28 23 Q-6 0 -28 -23Z" fill="#1d1d1d"/><path d="M-11 -19 L31 0 L-11 19 Q11 0 -11 -19Z" fill="rgb(200,200,200)"/></g>
<g transform="translate(162 -57) rotate(-45)"><path d="M-30 -25 L33 0 L-30 25 Q-7 0 -30 -25Z" fill="#1d1d1d"/><path d="M-12 -21 L33 0 L-12 21 Q12 0 -12 -21Z" fill="rgb(214,214,214)"/></g>
<g transform="translate(162 -10) rotate(-8)"><path d="M-32 -27 L35 0 L-32 27 Q-7 0 -32 -27Z" fill="#1d1d1d"/><path d="M-12 -22 L35 0 L-12 22 Q12 0 -12 -22Z" fill="rgb(232,232,232)"/></g>
<g transform="translate(162 36) rotate(28)"><path d="M-28 -23 L31 0 L-28 23 Q-6 0 -28 -23Z" fill="#1d1d1d"/><path d="M-11 -19 L31 0 L-11 19 Q11 0 -11 -19Z" fill="rgb(222,222,222)"/></g>
</g>
<g transform="translate(1075 585) rotate(-38)">
<ellipse cx="0" cy="0" rx="218" ry="114" fill="#2a2a2a" filter="url(#f-b6)"/>
<g transform="translate(-181 -46) rotate(-40)"><path d="M-27 -23 L30 0 L-27 23 Q-6 0 -27 -23Z" fill="#1d1d1d"/><path d="M-11 -19 L30 0 L-11 19 Q11 0 -11 -19Z" fill="rgb(232,232,232)"/></g>
<g transform="translate(-181 18) rotate(15)"><path d="M-34 -28 L37 0 L-34 28 Q-7 0 -34 -28Z" fill="#1d1d1d"/><path d="M-13 -23 L37 0 L-13 23 Q13 0 -13 -23Z" fill="rgb(240,240,240)"/></g>
<g transform="translate(-129 -60) rotate(-35)"><path d="M-27 -22 L30 0 L-27 22 Q-6 0 -27 -22Z" fill="#1d1d1d"/><path d="M-10 -18 L30 0 L-10 18 Q10 0 -10 -18Z" fill="rgb(232,232,232)"/></g>
<g transform="translate(-129 -13) rotate(-8)"><path d="M-34 -28 L37 0 L-34 28 Q-7 0 -34 -28Z" fill="#1d1d1d"/><path d="M-13 -23 L37 0 L-13 23 Q13 0 -13 -23Z" fill="rgb(232,232,232)"/></g>
<g transform="translate(-129 34) rotate(20)"><path d="M-28 -23 L31 0 L-28 23 Q-6 0 -28 -23Z" fill="#1d1d1d"/><path d="M-11 -19 L31 0 L-11 19 Q11 0 -11 -19Z" fill="rgb(232,232,232)"/></g>
<g transform="translate(-129 81) rotate(47)"><path d="M-30 -25 L34 0 L-30 25 Q-7 0 -30 -25Z" fill="#1d1d1d"/><path d="M-12 -21 L34 0 L-12 21 Q12 0 -12 -21Z" fill="rgb(168,168,168)"/></g>
<g transform="translate(-78 -98) rotate(-49)"><path d="M-30 -25 L33 0 L-30 25 Q-7 0 -30 -25Z" fill="#1d1d1d"/><path d="M-12 -20 L33 0 L-12 20 Q12 0 -12 -20Z" fill="rgb(232,232,232)"/></g>
<g transform="translate(-78 -54) rotate(-27)"><path d="M-31 -26 L35 0 L-31 26 Q-7 0 -31 -26Z" fill="#1d1d1d"/><path d="M-12 -21 L35 0 L-12 21 Q12 0 -12 -21Z" fill="rgb(214,214,214)"/></g>
<g transform="translate(-78 -10) rotate(-5)"><path d="M-33 -27 L37 0 L-33 27 Q-7 0 -33 -27Z" fill="#1d1d1d"/><path d="M-13 -23 L37 0 L-13 23 Q13 0 -13 -23Z" fill="rgb(200,200,200)"/></g>
<g transform="translate(-78 34) rotate(17)"><path d="M-29 -24 L32 0 L-29 24 Q-6 0 -29 -24Z" fill="#1d1d1d"/><path d="M-11 -20 L32 0 L-11 20 Q11 0 -11 -20Z" fill="rgb(200,200,200)"/></g>
<g transform="translate(-78 78) rotate(39)"><path d="M-29 -24 L32 0 L-29 24 Q-6 0 -29 -24Z" fill="#1d1d1d"/><path d="M-11 -20 L32 0 L-11 20 Q11 0 -11 -20Z" fill="rgb(240,240,240)"/></g>
<g transform="translate(-26 -83) rotate(-39)"><path d="M-33 -27 L36 0 L-33 27 Q-7 0 -33 -27Z" fill="#1d1d1d"/><path d="M-13 -23 L36 0 L-13 23 Q13 0 -13 -23Z" fill="rgb(232,232,232)"/></g>
<g transform="translate(-26 -36) rotate(-17)"><path d="M-27 -23 L30 0 L-27 23 Q-6 0 -27 -23Z" fill="#1d1d1d"/><path d="M-11 -19 L30 0 L-11 19 Q11 0 -11 -19Z" fill="rgb(168,168,168)"/></g>
<g transform="translate(-26 11) rotate(5)"><path d="M-27 -23 L30 0 L-27 23 Q-6 0 -27 -23Z" fill="#1d1d1d"/><path d="M-11 -19 L30 0 L-11 19 Q11 0 -11 -19Z" fill="rgb(232,232,232)"/></g>
<g transform="translate(-26 57) rotate(27)"><path d="M-30 -25 L34 0 L-30 25 Q-7 0 -30 -25Z" fill="#1d1d1d"/><path d="M-12 -21 L34 0 L-12 21 Q12 0 -12 -21Z" fill="rgb(240,240,240)"/></g>
<g transform="translate(-26 104) rotate(49)"><path d="M-28 -23 L31 0 L-28 23 Q-6 0 -28 -23Z" fill="#1d1d1d"/><path d="M-11 -19 L31 0 L-11 19 Q11 0 -11 -19Z" fill="rgb(185,185,185)"/></g>
<g transform="translate(26 -104) rotate(-49)"><path d="M-28 -23 L31 0 L-28 23 Q-6 0 -28 -23Z" fill="#1d1d1d"/><path d="M-11 -19 L31 0 L-11 19 Q11 0 -11 -19Z" fill="rgb(185,185,185)"/></g>
<g transform="translate(26 -57) rotate(-27)"><path d="M-28 -23 L31 0 L-28 23 Q-6 0 -28 -23Z" fill="#1d1d1d"/><path d="M-11 -19 L31 0 L-11 19 Q11 0 -11 -19Z" fill="rgb(168,168,168)"/></g>
<g transform="translate(26 -11) rotate(-5)"><path d="M-33 -27 L37 0 L-33 27 Q-7 0 -33 -27Z" fill="#1d1d1d"/><path d="M-13 -23 L37 0 L-13 23 Q13 0 -13 -23Z" fill="rgb(240,240,240)"/></g>
<g transform="translate(26 36) rotate(17)"><path d="M-32 -27 L35 0 L-32 27 Q-7 0 -32 -27Z" fill="#1d1d1d"/><path d="M-12 -22 L35 0 L-12 22 Q12 0 -12 -22Z" fill="rgb(232,232,232)"/></g>
<g transform="translate(26 83) rotate(39)"><path d="M-30 -25 L33 0 L-30 25 Q-7 0 -30 -25Z" fill="#1d1d1d"/><path d="M-12 -20 L33 0 L-12 20 Q12 0 -12 -20Z" fill="rgb(214,214,214)"/></g>
<g transform="translate(78 -78) rotate(-39)"><path d="M-26 -22 L29 0 L-26 22 Q-6 0 -26 -22Z" fill="#1d1d1d"/><path d="M-10 -18 L29 0 L-10 18 Q10 0 -10 -18Z" fill="rgb(222,222,222)"/></g>
<g transform="translate(78 -34) rotate(-17)"><path d="M-35 -29 L39 0 L-35 29 Q-8 0 -35 -29Z" fill="#1d1d1d"/><path d="M-13 -24 L39 0 L-13 24 Q13 0 -13 -24Z" fill="rgb(222,222,222)"/></g>
<g transform="translate(78 10) rotate(5)"><path d="M-31 -26 L35 0 L-31 26 Q-7 0 -31 -26Z" fill="#1d1d1d"/><path d="M-12 -22 L35 0 L-12 22 Q12 0 -12 -22Z" fill="rgb(232,232,232)"/></g>
<g transform="translate(78 54) rotate(27)"><path d="M-28 -23 L31 0 L-28 23 Q-6 0 -28 -23Z" fill="#1d1d1d"/><path d="M-11 -19 L31 0 L-11 19 Q11 0 -11 -19Z" fill="rgb(240,240,240)"/></g>
<g transform="translate(78 98) rotate(49)"><path d="M-35 -29 L39 0 L-35 29 Q-8 0 -35 -29Z" fill="#1d1d1d"/><path d="M-14 -24 L39 0 L-14 24 Q14 0 -14 -24Z" fill="rgb(185,185,185)"/></g>
<g transform="translate(129 -81) rotate(-47)"><path d="M-32 -27 L35 0 L-32 27 Q-7 0 -32 -27Z" fill="#1d1d1d"/><path d="M-12 -22 L35 0 L-12 22 Q12 0 -12 -22Z" fill="rgb(232,232,232)"/></g>
<g transform="translate(129 -34) rotate(-20)"><path d="M-27 -22 L30 0 L-27 22 Q-6 0 -27 -22Z" fill="#1d1d1d"/><path d="M-10 -18 L30 0 L-10 18 Q10 0 -10 -18Z" fill="rgb(214,214,214)"/></g>
<g transform="translate(129 13) rotate(8)"><path d="M-28 -23 L31 0 L-28 23 Q-6 0 -28 -23Z" fill="#1d1d1d"/><path d="M-11 -19 L31 0 L-11 19 Q11 0 -11 -19Z" fill="rgb(200,200,200)"/></g>
<g transform="translate(129 60) rotate(35)"><path d="M-26 -22 L29 0 L-26 22 Q-6 0 -26 -22Z" fill="#1d1d1d"/><path d="M-10 -18 L29 0 L-10 18 Q10 0 -10 -18Z" fill="rgb(185,185,185)"/></g>
<g transform="translate(181 -18) rotate(-15)"><path d="M-29 -24 L32 0 L-29 24 Q-6 0 -29 -24Z" fill="#1d1d1d"/><path d="M-11 -20 L32 0 L-11 20 Q11 0 -11 -20Z" fill="rgb(200,200,200)"/></g>
<g transform="translate(181 46) rotate(40)"><path d="M-30 -25 L33 0 L-30 25 Q-7 0 -30 -25Z" fill="#1d1d1d"/><path d="M-11 -20 L33 0 L-11 20 Q11 0 -11 -20Z" fill="rgb(232,232,232)"/></g>
</g>
<g transform="translate(835 400) rotate(-35)">
<ellipse cx="0" cy="0" rx="155" ry="142" fill="#2a2a2a" filter="url(#f-b6)"/>
<g transform="translate(-123 -72) rotate(-45)"><path d="M-26 -21 L28 0 L-26 21 Q-6 0 -26 -21Z" fill="#1d1d1d"/><path d="M-10 -18 L28 0 L-10 18 Q10 0 -10 -18Z" fill="rgb(185,185,185)"/></g>
<g transform="translate(-123 -13) rotate(-8)"><path d="M-30 -25 L33 0 L-30 25 Q-7 0 -30 -25Z" fill="#1d1d1d"/><path d="M-12 -21 L33 0 L-12 21 Q12 0 -12 -21Z" fill="rgb(232,232,232)"/></g>
<g transform="translate(-123 46) rotate(28)"><path d="M-30 -25 L33 0 L-30 25 Q-7 0 -30 -25Z" fill="#1d1d1d"/><path d="M-12 -21 L33 0 L-12 21 Q12 0 -12 -21Z" fill="rgb(200,200,200)"/></g>
<g transform="translate(-74 -92) rotate(-39)"><path d="M-30 -25 L33 0 L-30 25 Q-7 0 -30 -25Z" fill="#1d1d1d"/><path d="M-12 -21 L33 0 L-12 21 Q12 0 -12 -21Z" fill="rgb(214,214,214)"/></g>
<g transform="translate(-74 -40) rotate(-17)"><path d="M-33 -27 L36 0 L-33 27 Q-7 0 -33 -27Z" fill="#1d1d1d"/><path d="M-13 -23 L36 0 L-13 23 Q13 0 -13 -23Z" fill="rgb(240,240,240)"/></g>
<g transform="translate(-74 12) rotate(5)"><path d="M-32 -26 L35 0 L-32 26 Q-7 0 -32 -26Z" fill="#1d1d1d"/><path d="M-12 -22 L35 0 L-12 22 Q12 0 -12 -22Z" fill="rgb(214,214,214)"/></g>
<g transform="translate(-74 63) rotate(27)"><path d="M-32 -27 L36 0 L-32 27 Q-7 0 -32 -27Z" fill="#1d1d1d"/><path d="M-12 -22 L36 0 L-12 22 Q12 0 -12 -22Z" fill="rgb(214,214,214)"/></g>
<g transform="translate(-74 115) rotate(49)"><path d="M-30 -25 L33 0 L-30 25 Q-7 0 -30 -25Z" fill="#1d1d1d"/><path d="M-12 -21 L33 0 L-12 21 Q12 0 -12 -21Z" fill="rgb(200,200,200)"/></g>
<g transform="translate(-25 -132) rotate(-50)"><path d="M-32 -27 L36 0 L-32 27 Q-7 0 -32 -27Z" fill="#1d1d1d"/><path d="M-13 -22 L36 0 L-13 22 Q13 0 -13 -22Z" fill="rgb(222,222,222)"/></g>
<g transform="translate(-25 -83) rotate(-32)"><path d="M-30 -25 L33 0 L-30 25 Q-7 0 -30 -25Z" fill="#1d1d1d"/><path d="M-12 -21 L33 0 L-12 21 Q12 0 -12 -21Z" fill="rgb(168,168,168)"/></g>
<g transform="translate(-25 -35) rotate(-13)"><path d="M-26 -22 L29 0 L-26 22 Q-6 0 -26 -22Z" fill="#1d1d1d"/><path d="M-10 -18 L29 0 L-10 18 Q10 0 -10 -18Z" fill="rgb(168,168,168)"/></g>
<g transform="translate(-25 13) rotate(5)"><path d="M-30 -25 L33 0 L-30 25 Q-7 0 -30 -25Z" fill="#1d1d1d"/><path d="M-12 -21 L33 0 L-12 21 Q12 0 -12 -21Z" fill="rgb(185,185,185)"/></g>
<g transform="translate(-25 62) rotate(23)"><path d="M-26 -22 L29 0 L-26 22 Q-6 0 -26 -22Z" fill="#1d1d1d"/><path d="M-10 -18 L29 0 L-10 18 Q10 0 -10 -18Z" fill="rgb(240,240,240)"/></g>
<g transform="translate(-25 110) rotate(42)"><path d="M-32 -27 L36 0 L-32 27 Q-7 0 -32 -27Z" fill="#1d1d1d"/><path d="M-13 -22 L36 0 L-13 22 Q13 0 -13 -22Z" fill="rgb(185,185,185)"/></g>
<g transform="translate(25 -110) rotate(-42)"><path d="M-25 -21 L28 0 L-25 21 Q-6 0 -25 -21Z" fill="#1d1d1d"/><path d="M-10 -18 L28 0 L-10 18 Q10 0 -10 -18Z" fill="rgb(232,232,232)"/></g>
<g transform="translate(25 -62) rotate(-23)"><path d="M-26 -21 L29 0 L-26 21 Q-6 0 -26 -21Z" fill="#1d1d1d"/><path d="M-10 -18 L29 0 L-10 18 Q10 0 -10 -18Z" fill="rgb(232,232,232)"/></g>
<g transform="translate(25 -13) rotate(-5)"><path d="M-29 -24 L32 0 L-29 24 Q-6 0 -29 -24Z" fill="#1d1d1d"/><path d="M-11 -20 L32 0 L-11 20 Q11 0 -11 -20Z" fill="rgb(200,200,200)"/></g>
<g transform="translate(25 35) rotate(13)"><path d="M-27 -22 L30 0 L-27 22 Q-6 0 -27 -22Z" fill="#1d1d1d"/><path d="M-10 -18 L30 0 L-10 18 Q10 0 -10 -18Z" fill="rgb(168,168,168)"/></g>
<g transform="translate(25 83) rotate(32)"><path d="M-28 -23 L31 0 L-28 23 Q-6 0 -28 -23Z" fill="#1d1d1d"/><path d="M-11 -19 L31 0 L-11 19 Q11 0 -11 -19Z" fill="rgb(240,240,240)"/></g>
<g transform="translate(25 132) rotate(50)"><path d="M-32 -26 L35 0 L-32 26 Q-7 0 -32 -26Z" fill="#1d1d1d"/><path d="M-12 -22 L35 0 L-12 22 Q12 0 -12 -22Z" fill="rgb(185,185,185)"/></g>
<g transform="translate(74 -115) rotate(-49)"><path d="M-29 -24 L32 0 L-29 24 Q-6 0 -29 -24Z" fill="#1d1d1d"/><path d="M-11 -20 L32 0 L-11 20 Q11 0 -11 -20Z" fill="rgb(185,185,185)"/></g>
<g transform="translate(74 -63) rotate(-27)"><path d="M-26 -22 L29 0 L-26 22 Q-6 0 -26 -22Z" fill="#1d1d1d"/><path d="M-10 -18 L29 0 L-10 18 Q10 0 -10 -18Z" fill="rgb(168,168,168)"/></g>
<g transform="translate(74 -12) rotate(-5)"><path d="M-33 -27 L37 0 L-33 27 Q-7 0 -33 -27Z" fill="#1d1d1d"/><path d="M-13 -23 L37 0 L-13 23 Q13 0 -13 -23Z" fill="rgb(214,214,214)"/></g>
<g transform="translate(74 40) rotate(17)"><path d="M-27 -22 L30 0 L-27 22 Q-6 0 -27 -22Z" fill="#1d1d1d"/><path d="M-10 -18 L30 0 L-10 18 Q10 0 -10 -18Z" fill="rgb(185,185,185)"/></g>
<g transform="translate(74 92) rotate(39)"><path d="M-30 -25 L34 0 L-30 25 Q-7 0 -30 -25Z" fill="#1d1d1d"/><path d="M-12 -21 L34 0 L-12 21 Q12 0 -12 -21Z" fill="rgb(185,185,185)"/></g>
<g transform="translate(123 -46) rotate(-28)"><path d="M-30 -25 L33 0 L-30 25 Q-7 0 -30 -25Z" fill="#1d1d1d"/><path d="M-12 -21 L33 0 L-12 21 Q12 0 -12 -21Z" fill="rgb(200,200,200)"/></g>
<g transform="translate(123 13) rotate(8)"><path d="M-27 -22 L30 0 L-27 22 Q-6 0 -27 -22Z" fill="#1d1d1d"/><path d="M-10 -18 L30 0 L-10 18 Q10 0 -10 -18Z" fill="rgb(214,214,214)"/></g>
<g transform="translate(123 72) rotate(45)"><path d="M-31 -26 L34 0 L-31 26 Q-7 0 -31 -26Z" fill="#1d1d1d"/><path d="M-12 -21 L34 0 L-12 21 Q12 0 -12 -21Z" fill="rgb(232,232,232)"/></g>
</g>
</g>
<ellipse cx="935" cy="325" rx="42" ry="38" fill="#1c1c1c" opacity=".8" filter="url(#f-b6)"/>
</svg></div>
    <h2 style="letter-spacing:-.07px">Maiores quis impedit sit</h2>
  </div>
</div>

<!-- main scrollbar -->
<div class="abs" style="left:1500px;top:308px;width:4.2px;height:325px;background:#1c2430;border-radius:2.1px"></div>


<!-- LEFT SIDEBAR -->
<div id="left">
  <div class="abs" style="left:7px;top:11.8px;width:29px;height:29px;border-radius:3.5px;background:#3167f5"></div>
  <svg class="abs" style="left:14px;top:19px" width="15" height="15" viewBox="0 0 15 15"><path d="M7.3 3.2 V11.7 M3 7.45 H11.6" stroke="#fff" stroke-width="2.2" stroke-linecap="round"/></svg>
  <!-- layers -->
  <svg class="abs" style="left:11px;top:55px" width="21" height="21" viewBox="0 0 21 21" fill="none" stroke="#8e9ab8" stroke-width="1.7" stroke-linejoin="round" stroke-linecap="round">
    <path d="M10.3 3.2 L17.8 8.3 L10.3 13.4 L2.8 8.3 Z"/>
    <path d="M2.8 12.6 L10.3 17.7 L17.8 12.6"/>
  </svg>
  <!-- database -->
  <svg class="abs" style="left:11px;top:91px" width="21" height="21" viewBox="0 0 21 21" fill="none" stroke="#8e9ab8" stroke-width="1.7">
    <ellipse cx="10.4" cy="5.4" rx="6.2" ry="2.6"/>
    <path d="M4.2 5.4 V15 C4.2 16.6 7 17.6 10.4 17.6 C13.8 17.6 16.6 16.6 16.6 15 V5.4"/>
    <path d="M4.2 10.2 C4.2 11.8 7 12.8 10.4 12.8 C13.8 12.8 16.6 11.8 16.6 10.2"/>
  </svg>
  <!-- lines -->
  <svg class="abs" style="left:11px;top:126px" width="21" height="21" viewBox="0 0 21 21" fill="#8e9ab8">
    <rect x="3.2" y="3.4" width="14.4" height="2.4"/>
    <rect x="3.2" y="8.4" width="7" height="2.4"/><rect x="12.4" y="8.4" width="5.2" height="2.4"/>
    <rect x="3.2" y="13.4" width="2.6" height="2.4"/><rect x="8" y="13.4" width="9.6" height="2.4"/>
  </svg>
  <div class="abs" style="left:7px;top:160.5px;width:28px;height:1px;background:#d8dde6"></div>
  <!-- select 1 -->
  <svg class="abs" style="left:10px;top:175px" width="23" height="24" viewBox="0 0 23 24">
    <g fill="#2456e8"><rect x="4" y="2.2" width="2.6" height="2.4"/><rect x="8.2" y="2.2" width="2.6" height="2.4"/><rect x="12.4" y="2.2" width="2.6" height="2.4"/></g>
    <path d="M16.8 11 V6.6 H4.6 V17 H9" fill="none" stroke="#2456e8" stroke-width="2"/>
    <path d="M10.6 10.4 L18.6 16 L15.2 16.6 L17.2 20.6 L15.2 21.6 L13.2 17.6 L10.8 20 Z" fill="#2456e8"/>
  </svg>
  <!-- select 2 -->
  <svg class="abs" style="left:10px;top:209px" width="23" height="26" viewBox="0 0 23 26">
    <g fill="#2456e8"><rect x="4" y="2.6" width="2.6" height="2.4"/><rect x="8.6" y="2.6" width="2.6" height="2.4"/><rect x="13.2" y="2.6" width="2.6" height="2.4"/></g>
    <path d="M18.6 12 V7 H3.8 V19.4 H9" fill="none" stroke="#2456e8" stroke-width="2"/>
    <path d="M15.4 12 V10.2 H7 V16.4 H9.4" fill="none" stroke="#2456e8" stroke-width="1.7"/>
    <path d="M11.4 12.4 L19.4 18 L16 18.6 L18 22.6 L16 23.6 L14 19.6 L11.6 22 Z" fill="#2456e8"/>
  </svg>
  <!-- layout eye -->
  <svg class="abs" style="left:12px;top:247px" width="25" height="23" viewBox="0 0 25 23" fill="none" stroke="#8e9ab8" stroke-width="1.7">
    <path d="M14.8 16.4 H3.2 V3 H16.8 V9.6"/>
    <path d="M3.2 7.6 H16.8 M8 7.6 V16.4"/>
    <ellipse cx="17.2" cy="15.6" rx="5.6" ry="4.2" fill="#fff"/>
    <circle cx="17.2" cy="15.6" r="1.3" fill="#8e9ab8" stroke="none"/>
  </svg>
  <div class="abs" style="left:7px;top:281px;width:28px;height:1px;background:#d8dde6"></div>
  <!-- tools -->
  <svg class="abs" style="left:12px;top:298px" width="19" height="19" viewBox="0 0 19 19" fill="none" stroke="#8e9ab8" stroke-linecap="round">
   <g transform="translate(1.3 1.2) scale(.86)">
    <path d="M5.9 5.9 L12.7 12.7" stroke-width="2.5"/>
    <path d="M4.24 1.31 A2.7 2.7 0 1 1 1.31 4.24" stroke-width="2.1"/>
    <path d="M14.36 17.29 A2.7 2.7 0 1 1 17.29 14.36" stroke-width="2.1"/>
    <path d="M16.6 2 L11.6 7" stroke-width="3.8" stroke-linecap="butt"/>
    <path d="M12 6.6 L2.2 16.4" stroke-width="1.9"/>
   </g>
  </svg>
  <svg class="abs" style="left:15px;top:334px" width="12" height="15" viewBox="0 0 12 15" fill="none" stroke="#8e9ab8" stroke-linecap="round">
    <path d="M2.6 4.6 C2.6 1.2 9.2 1.2 9.2 4.7 C9.2 7.2 5.9 7.2 5.9 10" stroke-width="1.8"/>
    <circle cx="5.9" cy="12.9" r="1.1" fill="#8e9ab8" stroke="none"/>
  </svg>
</div>

<!-- RIGHT PANEL -->
<div id="right">
  <!-- breadcrumb -->
  <div class="abs" style="left:16px;top:15.7px;font-size:12px;line-height:15px;color:#4a5578;white-space:nowrap;letter-spacing:.25px">Page</div>
  <div class="abs" style="left:59.8px;top:15.7px;font-size:12px;line-height:15px;color:#4a5578;white-space:nowrap;letter-spacing:.25px">Section</div>
  <div class="abs" style="left:116.8px;top:15.7px;font-size:12px;line-height:15px;color:#4a5578;white-space:nowrap;letter-spacing:.25px">Row</div>
  <svg class="abs" style="left:49px;top:18px" width="8" height="10" viewBox="0 0 8 10"><path d="M2.6 2 L5.6 5 L2.6 8" fill="none" stroke="#8e9ab8" stroke-width="1.1"/></svg>
  <svg class="abs" style="left:105.6px;top:18px" width="8" height="10" viewBox="0 0 8 10"><path d="M2.6 2 L5.6 5 L2.6 8" fill="none" stroke="#8e9ab8" stroke-width="1.1"/></svg>
  <!-- close -->
  <svg class="abs" style="left:263px;top:16px" width="15" height="15" viewBox="0 0 15 15"><path d="M2.6 2.9 L11.9 12.2 M11.9 2.9 L2.6 12.2" stroke="#1e2530" stroke-width="2.1"/></svg>
  <!-- back arrow -->
  <svg class="abs" style="left:15px;top:49px" width="18" height="16" viewBox="0 0 18 16">
    <path d="M5.6 7.2 H10.4 C13.6 7.2 15.2 9.6 15.2 13" fill="none" stroke="#1e2530" stroke-width="2.1" stroke-linecap="round"/>
    <path d="M1.8 7.2 L7.4 3 V11.4 Z" fill="#1e2530"/>
  </svg>
  <div class="abs" style="left:39.5px;top:49.7px;font-size:12.6px;line-height:16px;font-weight:700;color:#1f2733;white-space:nowrap">Column</div>
  <!-- preset -->
  <div class="abs" style="left:169.5px;top:44.5px;width:106px;height:24.5px;border:1px solid #d9dde6;border-radius:3px"></div>
  <div class="abs" style="left:177px;top:49.5px;font-size:11.6px;line-height:15px;font-weight:700;color:#1f2733;white-space:nowrap">Default Preset</div>
  <svg class="abs" style="left:259px;top:51.5px" width="11" height="10" viewBox="0 0 11 10" fill="#1f2733">
    <rect x=".8" y="1.2" width="3" height="2.2"/><rect x="5.2" y="1.2" width="4.4" height="2.2"/>
    <rect x=".8" y="6" width="4.6" height="2.2"/><rect x="7" y="6" width="2.6" height="2.2"/>
  </svg>
  <!-- tabs -->
  <div class="abs" style="left:17.5px;top:86.6px;font-size:13.4px;line-height:16px;color:#2b5fe8;white-space:nowrap;letter-spacing:.1px;-webkit-text-stroke:.3px #2b5fe8">Content</div>
  <div class="abs" style="left:86.3px;top:86.6px;font-size:13.4px;line-height:16px;color:#4a5578;white-space:nowrap;letter-spacing:.2px;-webkit-text-stroke:.3px #4a5578">Design</div>
  <div class="abs" style="left:149.6px;top:86.6px;font-size:13.4px;line-height:16px;color:#4a5578;white-space:nowrap;letter-spacing:.2px;-webkit-text-stroke:.3px #4a5578">Advanced</div>
  <svg class="abs" style="left:236px;top:90.5px" width="9" height="7" viewBox="0 0 9 7"><path d="M.6 .9 H8.2 L4.4 5.6Z" fill="#1e2530"/></svg>
  <svg class="abs" style="left:250px;top:84px" width="24" height="20" viewBox="0 0 24 20">
    <rect x="3.4" y="2.6" width="17.4" height="13.6" fill="none" stroke="#1e2530" stroke-width="2"/>
    <rect x="1.6" y="16" width="21" height="1.9" rx=".6" fill="#1e2530"/>
  </svg>
  <div class="hr" style="top:115.3px;width:290px"></div>
  <div class="abs" style="left:7px;top:113px;width:69.5px;height:3.3px;background:#2f62ea"></div>
  <!-- search -->
  <div class="abs" style="left:16px;top:133px;width:259.5px;height:29px;border:1px solid #d9dde6;border-radius:3px"></div>
  <svg class="abs" style="left:25px;top:140px" width="15" height="15" viewBox="0 0 15 15">
    <circle cx="8" cy="7.2" r="4.2" fill="none" stroke="#9aa3ba" stroke-width="1.8"/>
    <path d="M4.8 10.6 L2.6 12.8" stroke="#9aa3ba" stroke-width="1.8" stroke-linecap="round"/>
  </svg>
  <div class="abs" style="left:43.7px;top:140px;font-size:13px;line-height:16px;color:#9aa3ba;white-space:nowrap;letter-spacing:.3px">Search settings...</div>
  <svg class="abs" style="left:252px;top:141px" width="14" height="14" viewBox="0 0 14 14"><path d="M2 1.8 H12.2 L8.3 7.2 V12 L5.9 10.6 V7.2 Z" fill="#1e2530"/></svg>
  <div class="hr" style="top:179px;width:290px"></div>

  <div class="lbl" style="left:16.3px;top:186.5px">Only Include Specific Posts</div>
  <div class="box" style="left:16.3px;top:211px;color:#a0a8bd;padding-left:6px;letter-spacing:.25px"><span style="font-size:12px">+</span> Select posts</div>
  <div class="lbl" style="left:16.3px;top:258.5px">Exclude Specific Posts</div>
  <div class="box" style="left:16.3px;top:283px;color:#a0a8bd;padding-left:6px;letter-spacing:.25px"><span style="font-size:12px">+</span> Select posts</div>
  <div class="lbl" style="left:16.3px;top:330.5px">Meta Query</div>
  <svg class="abs" style="left:18px;top:374px" width="13" height="13" viewBox="0 0 13 13"><path d="M6.4 1.4 V11.6 M1.3 6.5 H11.5" stroke="#6b7796" stroke-width="1.3"/></svg>
  <div class="lbl" style="left:39.8px;top:371.5px;color:#3d4766;-webkit-text-stroke:.25px #3d4766">Add Meta Query</div>

  <div class="lbl" style="left:16.3px;top:413.5px">Order By</div>
  <div class="box" style="left:16.3px;top:438px;color:#1f2733;padding-left:11px;letter-spacing:.2px;-webkit-text-stroke:.25px #1f2733">Publish Date</div>
  <svg class="abs" style="left:242px;top:448.5px" width="11" height="8" viewBox="0 0 11 8"><path d="M.8 1 H10.2 L5.5 6.6Z" fill="#1e2530"/></svg>
  <div class="lbl" style="left:16.3px;top:485.5px">Order</div>
  <div class="box" style="left:16.3px;top:510px;color:#a0a8bd;padding-left:11px;letter-spacing:.3px">Descending</div>
  <svg class="abs" style="left:242px;top:520.5px" width="11" height="8" viewBox="0 0 11 8"><path d="M.8 1 H10.2 L5.5 6.6Z" fill="#1e2530"/></svg>
  <div class="lbl" style="left:16.3px;top:557.5px">Posts Per Page</div>
  <div class="box" style="left:16.3px;top:582.3px;color:#1f2733;padding-left:11px;-webkit-text-stroke:.25px #1f2733">9</div>
  <div class="lbl" style="left:16.3px;top:629.5px">Post Offset</div>
  <div class="box" style="left:16.3px;top:654.3px;color:#1f2733;padding-left:11px;-webkit-text-stroke:.25px #1f2733">1</div>
  <div class="lbl" style="left:16.3px;top:701.5px">Ignore Sticky Posts</div>
  <div class="abs" style="left:16px;top:727px;width:44px;height:22px;border:1px solid #d9dde6;border-radius:11px;background:#fff"></div>
  <div class="abs" style="left:19px;top:728.5px;width:19px;height:19px;border-radius:50%;background:#cbd1e1"></div>
  <div class="hr" style="top:766.5px;width:280px"></div>
  <svg class="abs" style="left:15px;top:785px" width="8" height="10" viewBox="0 0 8 10"><path d="M1 .8 L7 5 L1 9.2Z" fill="#1e2530"/></svg>
  <div class="abs" style="left:33.2px;top:783px;font-size:13px;line-height:16px;font-weight:700;color:#1f2733;white-space:nowrap">Order</div>
  <div class="hr" style="top:815px;width:280px"></div>
  <svg class="abs" style="left:15px;top:833px" width="8" height="10" viewBox="0 0 8 10"><path d="M1 .8 L7 5 L1 9.2Z" fill="#1e2530"/></svg>
  <div class="abs" style="left:33.2px;top:831px;font-size:13px;line-height:16px;font-weight:700;color:#1f2733;white-space:nowrap">Admin Label</div>
  <div class="hr" style="top:862.7px;width:280px"></div>
  <div class="abs" style="left:18.2px;top:882.4px;width:17px;height:17px;border-radius:50%;background:#9aa3c0;color:#fff;font-size:12.5px;font-weight:700;line-height:17px;text-align:center">?</div>
  <!-- panel scrollbar -->
  <div class="abs" style="left:284px;top:491px;width:4.5px;height:410px;background:#1f2937;border-radius:2px"></div>
</div>

<!-- red arrow -->
<svg class="abs" style="left:1340px;top:400px;z-index:4" width="190" height="60" viewBox="0 0 190 60">
  <path d="M14.7 28.6 H168.5" stroke="#f0524f" stroke-width="8.2" stroke-linecap="round" fill="none"/>
  <path d="M155.2 15.2 L168.9 28.6 L155.2 42.4" stroke="#f0524f" stroke-width="8.2" stroke-linecap="round" stroke-linejoin="round" fill="none"/>
</svg>

<!-- TOP BAR -->
<div id="topbar">
  <!-- gear -->
  <svg class="abs" style="left:12px;top:15px" width="18" height="18" viewBox="0 0 18 18">
    <g transform="translate(9.1 9.2) scale(.89)" fill="#fff">
      <rect x="-1.7" y="-8" width="3.4" height="16" rx=".6"/>
      <rect x="-1.7" y="-8" width="3.4" height="16" rx=".6" transform="rotate(45)"/>
      <rect x="-1.7" y="-8" width="3.4" height="16" rx=".6" transform="rotate(90)"/>
      <rect x="-1.7" y="-8" width="3.4" height="16" rx=".6" transform="rotate(135)"/>
      <circle r="5.8"/>
      <circle r="3" fill="#232d3a"/>
    </g>
  </svg>
  <div class="t" style="left:48.5px;top:16px;letter-spacing:.15px;-webkit-text-stroke:.25px #fff">Loop Builder</div>

  <!-- dots -->
  <svg class="abs" style="left:714px;top:14px" width="10" height="20" viewBox="0 0 10 20" fill="#5c6c94">
    <circle cx="4.8" cy="4" r="1.7"/><circle cx="4.8" cy="9.9" r="1.7"/><circle cx="4.8" cy="15.7" r="1.7"/>
  </svg>
  <!-- desktop -->
  <svg class="abs" style="left:736px;top:14px" width="24" height="20" viewBox="0 0 24 20">
    <rect x="3.6" y="3.4" width="16.8" height="13" fill="none" stroke="#fff" stroke-width="2"/>
    <rect x="1.5" y="16.6" width="21" height="2" rx=".8" fill="#fff"/>
  </svg>
  <!-- tablet -->
  <svg class="abs" style="left:769px;top:14px" width="17" height="20" viewBox="0 0 17 20">
    <rect x="2.9" y="3.2" width="11" height="14.3" rx="1" fill="none" stroke="#5b6fa8" stroke-width="1.6"/>
    <circle cx="8.4" cy="14.6" r=".9" fill="#5b6fa8"/>
  </svg>
  <!-- phone -->
  <svg class="abs" style="left:799px;top:14px" width="15" height="20" viewBox="0 0 15 20">
    <rect x="2.8" y="4.2" width="9.4" height="13.3" rx="1" fill="none" stroke="#5b6fa8" stroke-width="1.6"/>
    <circle cx="7.5" cy="14.8" r=".9" fill="#5b6fa8"/>
  </svg>
  <!-- width box -->
  <div class="tb-box" style="left:837px;top:10px;width:99px;height:28.5px"></div>
  <svg class="abs" style="left:843px;top:15px" width="20" height="18" viewBox="0 0 20 18">
    <path d="M2.6 2.4V15.8M16.2 2.4V15.8" stroke="#b4bccd" stroke-width="1.7" fill="none"/>
    <path d="M4.6 9 L8.3 5.8 V8 H10.5 V5.8 L14.2 9 L10.5 12.2 V10 H8.3 V12.2 Z" fill="#b4bccd"/>
  </svg>
  <div class="t" style="left:870px;top:16px;color:#566583;font-size:13.2px">1398px</div>
  <!-- zoom box -->
  <div class="tb-box" style="left:978px;top:10px;width:100px;height:28.5px"></div>
  <svg class="abs" style="left:985px;top:14px" width="18" height="18" viewBox="0 0 18 18">
    <circle cx="9.4" cy="8.2" r="4.6" fill="none" stroke="#c9cfdd" stroke-width="2.3"/>
    <path d="M5.8 11.8 L2.9 14.7" stroke="#c9cfdd" stroke-width="2.6" stroke-linecap="round"/>
  </svg>
  <div class="t" style="left:1010.5px;top:16px;color:#566583;font-size:13.2px">100%</div>

  <!-- toggle -->
  <div class="abs" style="left:1304px;top:13px;width:44px;height:22.5px;border-radius:12px;background:#2f3a4f"></div>
  <div class="abs" style="left:1327.5px;top:14.5px;width:19px;height:19px;border-radius:50%;background:#fff"></div>
  <svg class="abs" style="left:1308px;top:15.5px" width="18" height="18" viewBox="0 0 18 18">
    <polygon points="8.80,2.40 10.60,4.46 13.33,4.27 13.14,7.00 15.20,8.80 13.14,10.60 13.33,13.33 10.60,13.14 8.80,15.20 7.00,13.14 4.27,13.33 4.46,10.60 2.40,8.80 4.46,7.00 4.27,4.27 7.00,4.46" fill="#f3d54a" stroke="#f3d54a" stroke-width=".8" stroke-linejoin="round"/>
    <circle cx="8.8" cy="8.8" r="2.9" fill="#fbc22f" stroke="#94710f" stroke-width="1.2"/>
  </svg>
  <!-- undo -->
  <svg class="abs" style="left:1361px;top:15px" width="20" height="18" viewBox="0 0 20 18">
    <path d="M5.6 9.4 Q10.6 15.2 17.1 7" fill="none" stroke="#fff" stroke-width="2.7" stroke-linecap="round"/>
    <path d="M2.5 6 L8.6 7 L3.7 12.6 Z" fill="#fff" stroke="#fff" stroke-width=".6" stroke-linejoin="round"/>
  </svg>
  <!-- redo -->
  <svg class="abs" style="left:1395px;top:15px" width="20" height="18" viewBox="0 0 20 18">
    <path d="M3.4 12 Q8.2 4.4 14.2 9.8" fill="none" stroke="#8b95a5" stroke-width="2.6" stroke-linecap="round"/>
    <path d="M11.9 12.8 L17.2 6.6 L17.5 12.9 Z" fill="#8b95a5" stroke="#8b95a5" stroke-width=".6" stroke-linejoin="round"/>
  </svg>
  <!-- clock -->
  <svg class="abs" style="left:1429px;top:15px" width="19" height="19" viewBox="0 0 19 19">
    <circle cx="9.4" cy="9.2" r="6.3" fill="none" stroke="#fff" stroke-width="2.5"/>
    <path d="M9.3 5.8 V9.7 H12.6" fill="none" stroke="#fff" stroke-width="2.2"/>
  </svg>
  <!-- arrows -->
  <svg class="abs" style="left:1463px;top:15px" width="18" height="19" viewBox="0 0 18 19">
    <path d="M4.6 2 V12.5M12.6 16.8 V6.3" stroke="#fff" stroke-width="2.5" fill="none"/>
    <path d="M1.6 11.6 H7.6 L4.6 16.8Z M9.6 7.2 H15.6 L12.6 2Z" fill="#fff"/>
  </svg>
  <!-- trash -->
  <svg class="abs" style="left:1497px;top:15px" width="17" height="19" viewBox="0 0 17 19" fill="#fff">
    <rect x="5.4" y="2" width="5.4" height="2.4" rx=".6"/>
    <rect x="1.7" y="3.8" width="13" height="2.6" rx=".6"/>
    <path d="M2.8 7.8 H13.6 V16.4 H2.8Z M5 10.2 V14 H7.2 V10.2Z M9.2 10.2 V14 H11.4 V10.2Z" fill-rule="evenodd"/>
  </svg>
  <!-- power -->
  <svg class="abs" style="left:1529px;top:15px" width="20" height="19" viewBox="0 0 20 19">
    <path d="M6.1 4.2 A6.3 6.3 0 1 0 13.3 4.2" fill="none" stroke="#fff" stroke-width="2.5" stroke-linecap="round"/>
    <path d="M9.7 2 V9.5" stroke="#fff" stroke-width="2.4" fill="none"/>
    <path d="M6.5 8.6 H12.9 L9.7 12.9Z" fill="#fff"/>
  </svg>

  <!-- Exit -->
  <div class="tb-box" style="left:1562.5px;top:9px;width:68.5px;height:30.5px"></div>
  <div class="abs" style="left:1610px;top:9px;width:1px;height:30px;background:#3b4759"></div>
  <div class="t" style="left:1575.3px;top:16px;font-weight:700;font-size:12.6px;letter-spacing:-.25px">Exit</div>
  <svg class="abs" style="left:1616px;top:21px" width="8" height="6" viewBox="0 0 8 6"><path d="M.6 1 H7.2 L3.9 5.4Z" fill="#5b6fa8"/></svg>
  <!-- Preview -->
  <div class="tb-box" style="left:1644px;top:9px;width:75px;height:30.5px"></div>
  <div class="t" style="left:1657.4px;top:16px;font-weight:700;font-size:12.6px">Preview</div>
  <!-- Save -->
  <div class="abs" style="left:1732px;top:9px;width:56.5px;height:30.5px;border-radius:3px;background:#35435a"></div>
  <div class="t" style="left:1745.4px;top:16px;font-weight:700;font-size:12.6px">Save</div>
</div>

<div class="abs" style="left:0;top:938px;width:1800px;height:15px;background:linear-gradient(to bottom,rgba(0,0,0,0),rgba(0,0,0,.075));z-index:6;pointer-events:none"></div>
</body>
</html>
